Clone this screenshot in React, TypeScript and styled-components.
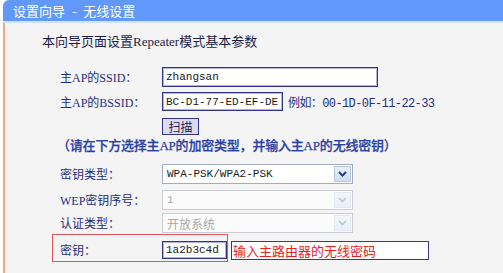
import React from "react";
import styled, { createGlobalStyle } from "styled-components";

const GlobalStyle = createGlobalStyle`
  html, body { margin: 0; padding: 0; background: #ffffff; }
  body { font-family: "Noto Sans CJK SC", sans-serif; }
  * { box-sizing: border-box; }
`;

const Page = styled.div`
  width: 503px;
  height: 273px;
  overflow: hidden;
  padding-left: 3px;
  display: flex;
  flex-direction: column;
  background: #ffffff;
`;

const TitleBar = styled.div`
  height: 23px;
  flex: none;
  background: #6199fa;
  border-top-left-radius: 6px;
  border-bottom: 2px solid #d3e2fb;
  color: #ffffff;
  font-size: 13px;
  line-height: 21px;
  padding-left: 10px;
  white-space: pre;
  word-spacing: 4px;
`;

const Body = styled.div`
  flex: 1;
  background: #f4f4f4;
  border-left: 2px solid #f3a77c;
  padding: 11px 0 0 37px;
`;

const Heading = styled.div`
  font-size: 13px;
  line-height: 16px;
  height: 16px;
  color: #1c1c4a;
  font-family: "Liberation Serif", "Noto Sans CJK SC", serif;
`;

const Form = styled.div`
  margin-top: 14px;
  margin-left: 18px;
  display: flex;
  flex-direction: column;
`;

const Row = styled.div<{ $h?: number }>`
  display: grid;
  grid-template-columns: 102px auto;
  align-items: center;
  height: ${(p) => p.$h ?? 25}px;
`;

const Label = styled.div`
  font-size: 12px;
  color: #1f2f80;
  font-family: "Liberation Serif", "Noto Sans CJK SC", serif;
  white-space: nowrap;
`;

const Inline = styled.div`
  display: flex;
  align-items: center;
`;

const TextBox = styled.input<{ $w: number; $h?: number }>`
  width: ${(p) => p.$w}px;
  height: ${(p) => p.$h ?? 19}px;
  border: 1px solid #33338a;
  box-shadow: inset 0 0 0 1px #b4b4d8;
  background: #ffffff;
  padding: 0 0 0 3px;
  margin: 0;
  font-family: "Liberation Mono", monospace;
  font-size: 11px;
  color: #1a1a1a;
  outline: none;
`;

const Example = styled.span`
  margin-left: 5px;
  font-size: 12px;
  color: #1f2f80;
  font-family: "Liberation Mono", "Noto Sans CJK SC", monospace;
  letter-spacing: -0.6px;
`;

const ScanButton = styled.button`
  width: 37px;
  height: 17px;
  padding: 0;
  margin: 0;
  border: 1px solid #33338a;
  background: #dcdcf0;
  color: #1c1c4a;
  font-family: "Noto Sans CJK SC", sans-serif;
  font-size: 12px;
  line-height: 15px;
`;

const Note = styled.div`
  height: 22px;
  line-height: 14px;
  font-size: 13px;
  color: #2a3fa3;
  font-weight: 500;
  margin-left: -3px;
  font-family: "Liberation Serif", "Noto Sans CJK SC", serif;
  white-space: nowrap;
  letter-spacing: -0.2px;
  -webkit-text-stroke: 0.25px #2a3fa3;
`;

const SelectBox = styled.div<{ $disabled?: boolean }>`
  width: 191px;
  height: 20px;
  border: 1px solid ${(p) => (p.$disabled ? "#c9cdd3" : "#a3adbb")};
  background: ${(p) => (p.$disabled ? "#fbfbfb" : "#ffffff")};
  display: flex;
  align-items: center;
  padding: 1px;
`;

const SelectValue = styled.div<{ $disabled?: boolean; $cjk?: boolean }>`
  flex: 1;
  padding-left: 3px;
  font-family: ${(p) =>
    p.$cjk ? '"Noto Sans CJK SC", sans-serif' : '"Liberation Mono", monospace'};
  font-size: ${(p) => (p.$cjk ? 12 : 11)}px;
  color: ${(p) => (p.$disabled ? "#a8a8a8" : "#1a1a1a")};
  white-space: nowrap;
`;

const ArrowBox = styled.div<{ $disabled?: boolean }>`
  width: 17px;
  height: 16px;
  border: 1px solid ${(p) => (p.$disabled ? "#e2e9f4" : "#b5c7e3")};
  background: ${(p) =>
    p.$disabled
      ? "linear-gradient(#f3f6fb, #e9eff8)"
      : "linear-gradient(#e8effa, #cddcf2)"};
  display: flex;
  align-items: center;
  justify-content: center;
`;

const KeyFrame = styled.div`
  margin-left: -8px;
  width: 176px;
  height: 28px;
  border: 1px solid #e0565a;
  padding: 4px 0 0 7px;
  display: grid;
  grid-template-columns: 102px 65px;
  align-items: center;
`;

const KeyRow = styled.div`
  display: flex;
  align-items: flex-start;
`;

const HintBox = styled.div`
  margin-left: 3px;
  margin-top: 7px;
  width: 198px;
  height: 19px;
  border: 1px solid #35359a;
  background: #ffffff;
  color: #e8231f;
  font-size: 13px;
  line-height: 17px;
  padding-left: 1px;
  white-space: nowrap;
`;

const Chevron: React.FC<{ disabled?: boolean }> = ({ disabled }) => (
  <svg width="9" height="6" viewBox="0 0 9 6">
    <polyline
      points="1,1 4.5,4.6 8,1"
      fill="none"
      stroke={disabled ? "#b3c1da" : "#2a3a78"}
      strokeWidth={disabled ? 1.4 : 2}
    />
  </svg>
);

const Select: React.FC<{ value: string; disabled?: boolean; cjk?: boolean }> = ({
  value,
  disabled,
  cjk,
}) => (
  <SelectBox $disabled={disabled}>
    <SelectValue $disabled={disabled} $cjk={cjk}>
      {value}
    </SelectValue>
    <ArrowBox $disabled={disabled}>
      <Chevron disabled={disabled} />
    </ArrowBox>
  </SelectBox>
);

export default function App() {
  return (
    <>
      <GlobalStyle />
      <Page>
        <TitleBar>设置向导 - 无线设置</TitleBar>
        <Body>
          <Heading>本向导页面设置Repeater模式基本参数</Heading>
          <Form>
            <Row>
              <Label>主AP的SSID：</Label>
              <TextBox $w={216} $h={20} defaultValue="zhangsan" readOnly />
            </Row>
            <Row>
              <Label>主AP的BSSID：</Label>
              <Inline>
                <TextBox $w={121} defaultValue="BC-D1-77-ED-EF-DE" readOnly />
                <Example>例如：00-1D-0F-11-22-33</Example>
              </Inline>
            </Row>
            <Row>
              <span />
              <Inline>
                <ScanButton>扫描</ScanButton>
              </Inline>
            </Row>
            <Note>（请在下方选择主AP的加密类型，并输入主AP的无线密钥）</Note>
            <Row $h={26}>
              <Label>密钥类型：</Label>
              <Select value="WPA-PSK/WPA2-PSK" />
            </Row>
            <Row>
              <Label>WEP密钥序号：</Label>
              <Select value="1" disabled />
            </Row>
            <Row $h={22}>
              <Label>认证类型：</Label>
              <Select value="开放系统" disabled cjk />
            </Row>
            <KeyRow>
              <KeyFrame>
                <Label>密钥：</Label>
                <TextBox $w={65} $h={18} defaultValue="1a2b3c4d" readOnly />
              </KeyFrame>
              <HintBox>输入主路由器的无线密码</HintBox>
            </KeyRow>
          </Form>
        </Body>
      </Page>
    </>
  );
}
